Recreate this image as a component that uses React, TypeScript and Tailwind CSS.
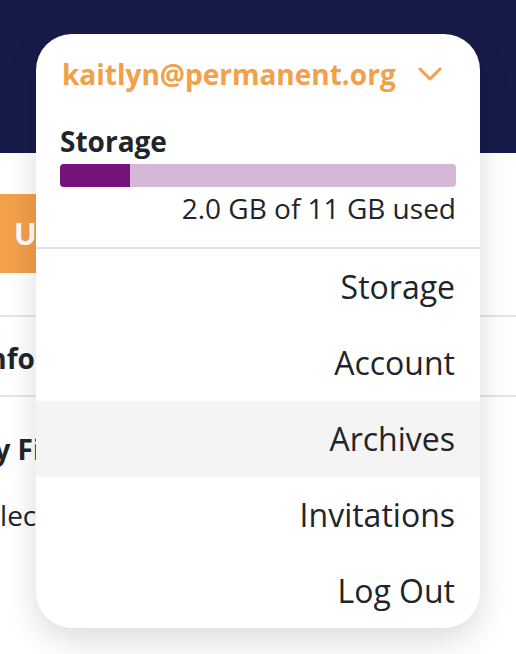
import React from "react";

const items = ["Storage", "Account", "Archives", "Invitations", "Log Out"];

export default function App() {
  return (
    <div
      className="relative w-[516px] h-[654px] overflow-hidden bg-white text-[#212529]"
      style={{ fontFamily: '"Open Sans", "Noto Sans", sans-serif' }}
    >
      {/* background page */}
      <div className="h-[153px] bg-[#161b4a]" />
      <div className="mt-[41px] h-[79px] w-[200px] bg-[#f2a04a] flex items-center pl-[14px] text-white font-bold text-[30px]">
        Upload
      </div>
      <div className="mt-[42px] h-[2px] bg-[#e3e6ea]" />
      <div className="h-[78px] flex items-center font-bold text-[28px] -ml-[21px] pt-[4px]">Info</div>
      <div className="h-[2px] bg-[#e3e6ea]" />
      <div className="mt-[32px] font-bold text-[28px] -ml-[32px] leading-[40px] whitespace-nowrap">My Files</div>
      <div className="mt-[26px] text-[28px] -ml-[31px] leading-[40px] whitespace-nowrap">Select</div>

      {/* dropdown card */}
      <div className="absolute left-[36px] top-[34px] w-[444px] h-[594px] bg-white rounded-[36px] shadow-[0_12px_32px_rgba(0,0,0,0.14)] overflow-hidden flex flex-col">
        <div className="h-[80px] shrink-0 flex items-center justify-between pl-[26px] pr-[38px]">
          <span className="text-[28px] font-bold text-[#f2a04a] leading-[36px]">kaitlyn@permanent.org</span>
          <svg width="24" height="14" viewBox="0 0 24 14" fill="none">
            <path d="M2 2 L12 12 L22 2" stroke="#f2a04a" strokeWidth="3" strokeLinecap="round" strokeLinejoin="round" />
          </svg>
        </div>
        <div className="px-[24px] pt-[11px] pb-[22px]">
          <div className="text-[28px] font-bold leading-[32px] text-[#212529]">Storage</div>
          <div className="mt-[7px] h-[23px] rounded-[4px] bg-[#d5b7d6] overflow-hidden flex">
            <div className="h-full bg-[#76137a]" style={{ width: "17.7%" }} />
          </div>
          <div className="mt-[4px] text-right text-[28px] leading-[34px] text-[#212529]">2.0 GB of 11 GB used</div>
        </div>
        <div className="h-[2px] bg-[#dfe3e8] shrink-0" />
        {items.map((it) => (
          <div
            key={it}
            className={`h-[76px] shrink-0 flex items-center justify-end pr-[25px] text-[32px] text-[#212529] ${
              it === "Archives" ? "bg-[#f4f4f4]" : ""
            }`}
          >
            {it}
          </div>
        ))}
      </div>
    </div>
  );
}
